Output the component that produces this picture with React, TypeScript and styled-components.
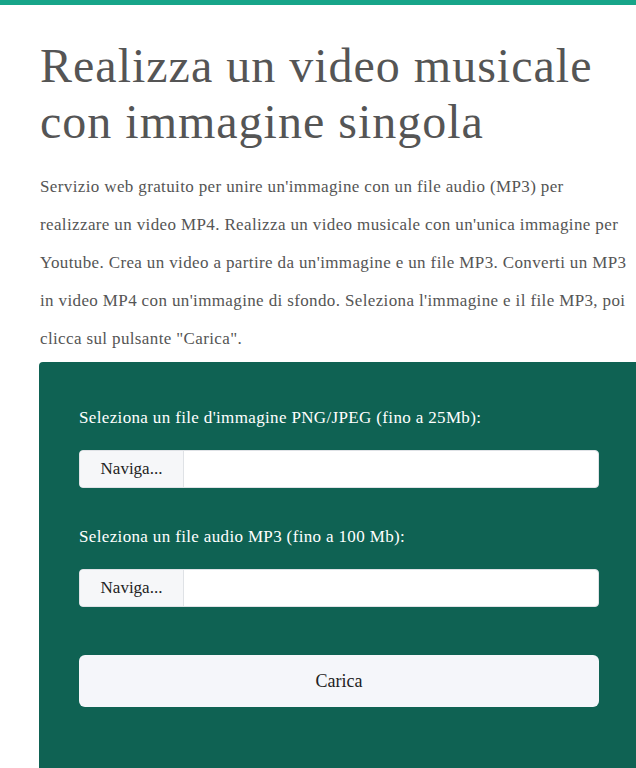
import styled, { createGlobalStyle } from "styled-components";

const GlobalStyle = createGlobalStyle`
  html, body {
    margin: 0;
    padding: 0;
    background: #ffffff;
    overflow: hidden;
  }
  body {
    font-family: "Liberation Serif", "DejaVu Serif", serif;
    color: #555555;
  }
`;

const TopBar = styled.div`
  height: 5px;
  background-color: #17a589;
`;

const Page = styled.main`
  width: 600px;
  padding: 0 0 0 40px;
`;

const Title = styled.h1`
  margin: 33px 0 0 0;
  font-size: 48px;
  font-weight: 400;
  line-height: 56px;
  letter-spacing: 1px;
  color: #555555;
`;

const Intro = styled.p`
  margin: 18px 0 0 0;
  font-size: 17px;
  line-height: 38px;
  letter-spacing: 0.37px;
  white-space: nowrap;
  color: #555555;
`;

const Panel = styled.section`
  margin: 4px 0 0 -1px;
  width: 600px;
  height: 420px;
  box-sizing: border-box;
  padding: 44px 40px;
  background-color: #0f6253;
  border-radius: 4px 4px 0 0;
  display: flex;
  flex-direction: column;
`;

const Label = styled.label`
  display: block;
  font-size: 17px;
  line-height: 24px;
  letter-spacing: 0.35px;
  color: #ffffff;
  margin-bottom: 20px;
`;

const Field = styled.div<{ $spaced?: boolean }>`
  display: flex;
  height: 38px;
  border-radius: 4px;
  overflow: hidden;
  background: #ffffff;
  border: 1px solid #dfe2e6;
  box-sizing: border-box;
  margin-bottom: ${({ $spaced }) => ($spaced ? "37px" : "0")};
`;

const BrowseButton = styled.span`
  width: 103px;
  display: flex;
  align-items: center;
  justify-content: center;
  background: #f6f7f9;
  border-right: 1px solid #dfe2e6;
  font-size: 17px;
  color: #222222;
`;

const FileName = styled.span`
  flex: 1;
`;

const SubmitButton = styled.button`
  margin-top: 48px;
  height: 52px;
  border: none;
  border-radius: 6px;
  background: #f5f6fa;
  font-family: "Liberation Serif", serif;
  font-size: 18px;
  color: #222222;
`;

export default function App() {
  return (
    <>
      <GlobalStyle />
      <TopBar />
      <Page>
        <Title>
          Realizza un video musicale
          <br />
          con immagine singola
        </Title>
        <Intro>
          Servizio web gratuito per unire un'immagine con un file audio (MP3) per
          <br />
          realizzare un video MP4. Realizza un video musicale con un'unica immagine per
          <br />
          Youtube. Crea un video a partire da un'immagine e un file MP3. Converti un MP3
          <br />
          in video MP4 con un'immagine di sfondo. Seleziona l'immagine e il file MP3, poi
          <br />
          clicca sul pulsante "Carica".
        </Intro>
        <Panel>
          <Label>Seleziona un file d'immagine PNG/JPEG (fino a 25Mb):</Label>
          <Field $spaced>
            <BrowseButton>Naviga...</BrowseButton>
            <FileName />
          </Field>
          <Label>Seleziona un file audio MP3 (fino a 100 Mb):</Label>
          <Field>
            <BrowseButton>Naviga...</BrowseButton>
            <FileName />
          </Field>
          <SubmitButton>Carica</SubmitButton>
        </Panel>
      </Page>
    </>
  );
}
